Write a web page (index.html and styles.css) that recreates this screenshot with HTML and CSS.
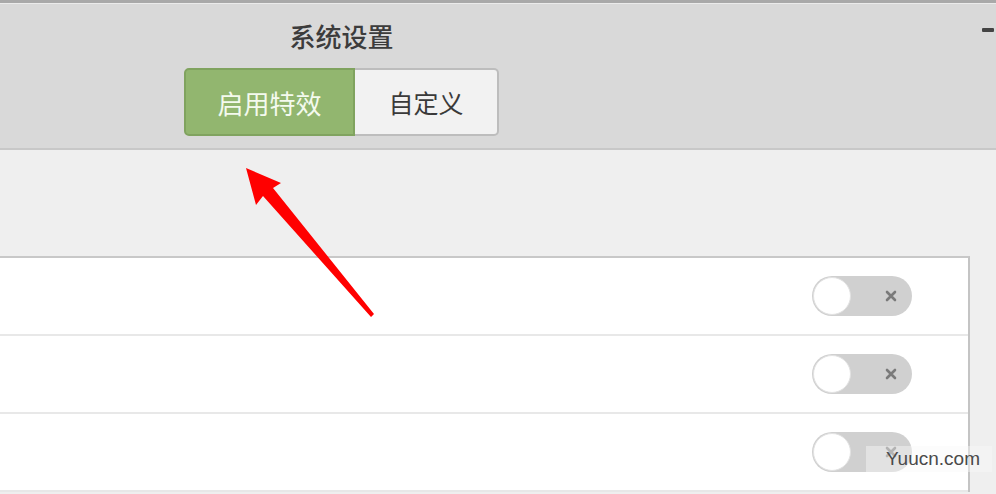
FILE: index.html
```html
<!DOCTYPE html>
<html lang="zh-CN">

<head>
    <meta charset="UTF-8">
    <title>系统设置</title>
    <link rel="stylesheet" href="styles.css">
</head>

<body>
    <div class="window">
        <div class="header">
            <div class="header-inner">
                <h1 class="title">系统设置</h1>
                <div class="segment">
                    <span class="seg-btn on">启用特效</span>
                    <span class="seg-btn">自定义</span>
                </div>
            </div>
            <span class="minimize"></span>
        </div>

        <div class="content">
            <ul class="card">
                <li class="row">
                    <span class="toggle"><span class="knob"></span>
                        <svg class="cross" width="12" height="12" viewBox="0 0 12 12"><path d="M2 2L10 10M10 2L2 10" stroke="#7a7a7a" stroke-width="2.6" stroke-linecap="round"/></svg>
                    </span>
                </li>
                <li class="row">
                    <span class="toggle"><span class="knob"></span>
                        <svg class="cross" width="12" height="12" viewBox="0 0 12 12"><path d="M2 2L10 10M10 2L2 10" stroke="#7a7a7a" stroke-width="2.6" stroke-linecap="round"/></svg>
                    </span>
                </li>
                <li class="row">
                    <span class="toggle"><span class="knob"></span>
                        <svg class="cross" width="12" height="12" viewBox="0 0 12 12"><path d="M2 2L10 10M10 2L2 10" stroke="#7a7a7a" stroke-width="2.6" stroke-linecap="round"/></svg>
                    </span>
                </li>
            </ul>
        </div>

        <!-- 红色箭头标注 -->
        <svg class="arrow" width="996" height="494" viewBox="0 0 996 494">
            <polygon points="246,168 281,183 273,188 374,314 371,317 263,196 256,205" fill="#ff0000"/>
        </svg>

        <div class="watermark">Yuucn.com</div>
    </div>
</body>

</html>
```

FILE: styles.css
```css
* {
    margin: 0;
    padding: 0;
    list-style: none;
    box-sizing: border-box;
}

body {
    background: #efefef;
    font-family: "Noto Sans CJK SC", "Noto Sans", sans-serif;
    overflow: hidden;
}

.window {
    width: 996px;
    height: 494px;
    position: relative;
    overflow: hidden;
}

.header {
    height: 150px;
    background: #d9d9d9;
    border-top: 3px solid #a9a9a9;
    border-bottom: 2px solid #c8c8c8;
    box-shadow: inset 0 1px 0 #ebebeb;
    position: relative;
}

.header-inner {
    width: 683px;
    display: flex;
    flex-direction: column;
    align-items: center;
    padding-top: 17px;
}

.title {
    font-size: 26px;
    line-height: 32px;
    font-weight: 500;
    color: #3c3c3c;
}

.segment {
    display: flex;
    margin-top: 16px;
    height: 68px;
}

.seg-btn {
    display: flex;
    align-items: center;
    justify-content: center;
    font-size: 25px;
    color: #3a3a3a;
    background: #f2f2f2;
    border: 2px solid #bdbdbd;
    border-left: none;
    border-radius: 0 5px 5px 0;
    width: 144px;
}

.seg-btn.on {
    width: 171px;
    background: #92b66f;
    border: 2px solid #80a35f;
    border-radius: 5px 0 0 5px;
    color: #f4faee;
    font-size: 26px;
}

.minimize {
    position: absolute;
    right: 2px;
    top: 25px;
    width: 12px;
    height: 4px;
    background: #444;
    border-radius: 1px;
}

.content {
    padding-top: 106px;
}

.card {
    margin: 0 26px 0 -10px;
    background: #fff;
    border-top: 2px solid #c8c8c8;
    border-right: 2px solid #c4c4c4;
}

.row {
    height: 78px;
    border-bottom: 2px solid #e8e8e8;
    display: flex;
    align-items: center;
    justify-content: flex-end;
    padding-right: 56px;
}

.toggle {
    width: 100px;
    height: 40px;
    border-radius: 20px;
    background: #d0d0d0;
    display: flex;
    align-items: center;
    justify-content: space-between;
    padding: 0 15px 0 1px;
}

.knob {
    width: 38px;
    height: 38px;
    border-radius: 50%;
    background: #fff;
    border: 1px solid #e2e2e2;
}

.arrow {
    position: absolute;
    left: 0;
    top: 0;
}

.watermark {
    position: absolute;
    left: 866px;
    top: 446px;
    padding: 2px 12px 2px 20px;
    background: rgba(248, 248, 248, 0.45);
    font-family: "Liberation Sans", Arial, sans-serif;
    font-size: 19px;
    color: #4a4a4a;
}
```
